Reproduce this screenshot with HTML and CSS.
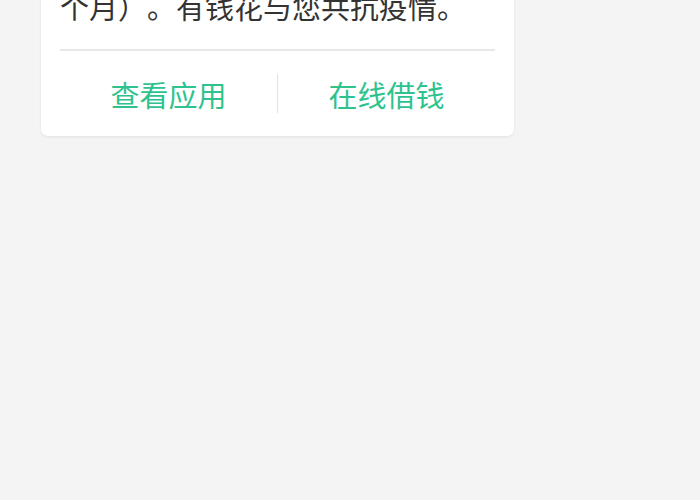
FILE: index.html
```html
<!DOCTYPE html>
<html lang="zh-CN">
<head>
<meta charset="utf-8">
<link rel="stylesheet" href="styles.css">
</head>
<body>
<div class="card">
  <p class="msg">个月）。有钱花与您共抗疫情。</p>
  <div class="actions">
    <a class="btn">查看应用</a>
    <span class="sep"></span>
    <a class="btn">在线借钱</a>
  </div>
</div>
</body>
</html>
```

FILE: styles.css
```css
html, body {
  margin: 0;
  padding: 0;
  background: #f4f4f4;
  width: 700px;
  height: 500px;
  overflow: hidden;
  font-family: "Noto Sans CJK SC", "Noto Sans", sans-serif;
}
.card {
  margin: -60px 0 0 41px;
  width: 473px;
  background: #fff;
  border-radius: 7px;
  box-shadow: 0 1px 3px rgba(0,0,0,0.08);
  padding: 0 19px;
  box-sizing: border-box;
}
.msg {
  margin: 0;
  padding: 46px 0 23px;
  font-size: 29px;
  line-height: 40px;
  color: #333;
  border-bottom: 2px solid #e8e8e8;
  text-spacing-trim: space-all;
  white-space: nowrap;
}
.actions {
  display: flex;
  align-items: center;
  height: 85px;
}
.btn {
  flex: 1;
  text-align: center;
  font-size: 29px;
  line-height: 40px;
  color: #2ec38e;
}
.sep {
  width: 1px;
  height: 39px;
  background: #e2e2e2;
}
```
